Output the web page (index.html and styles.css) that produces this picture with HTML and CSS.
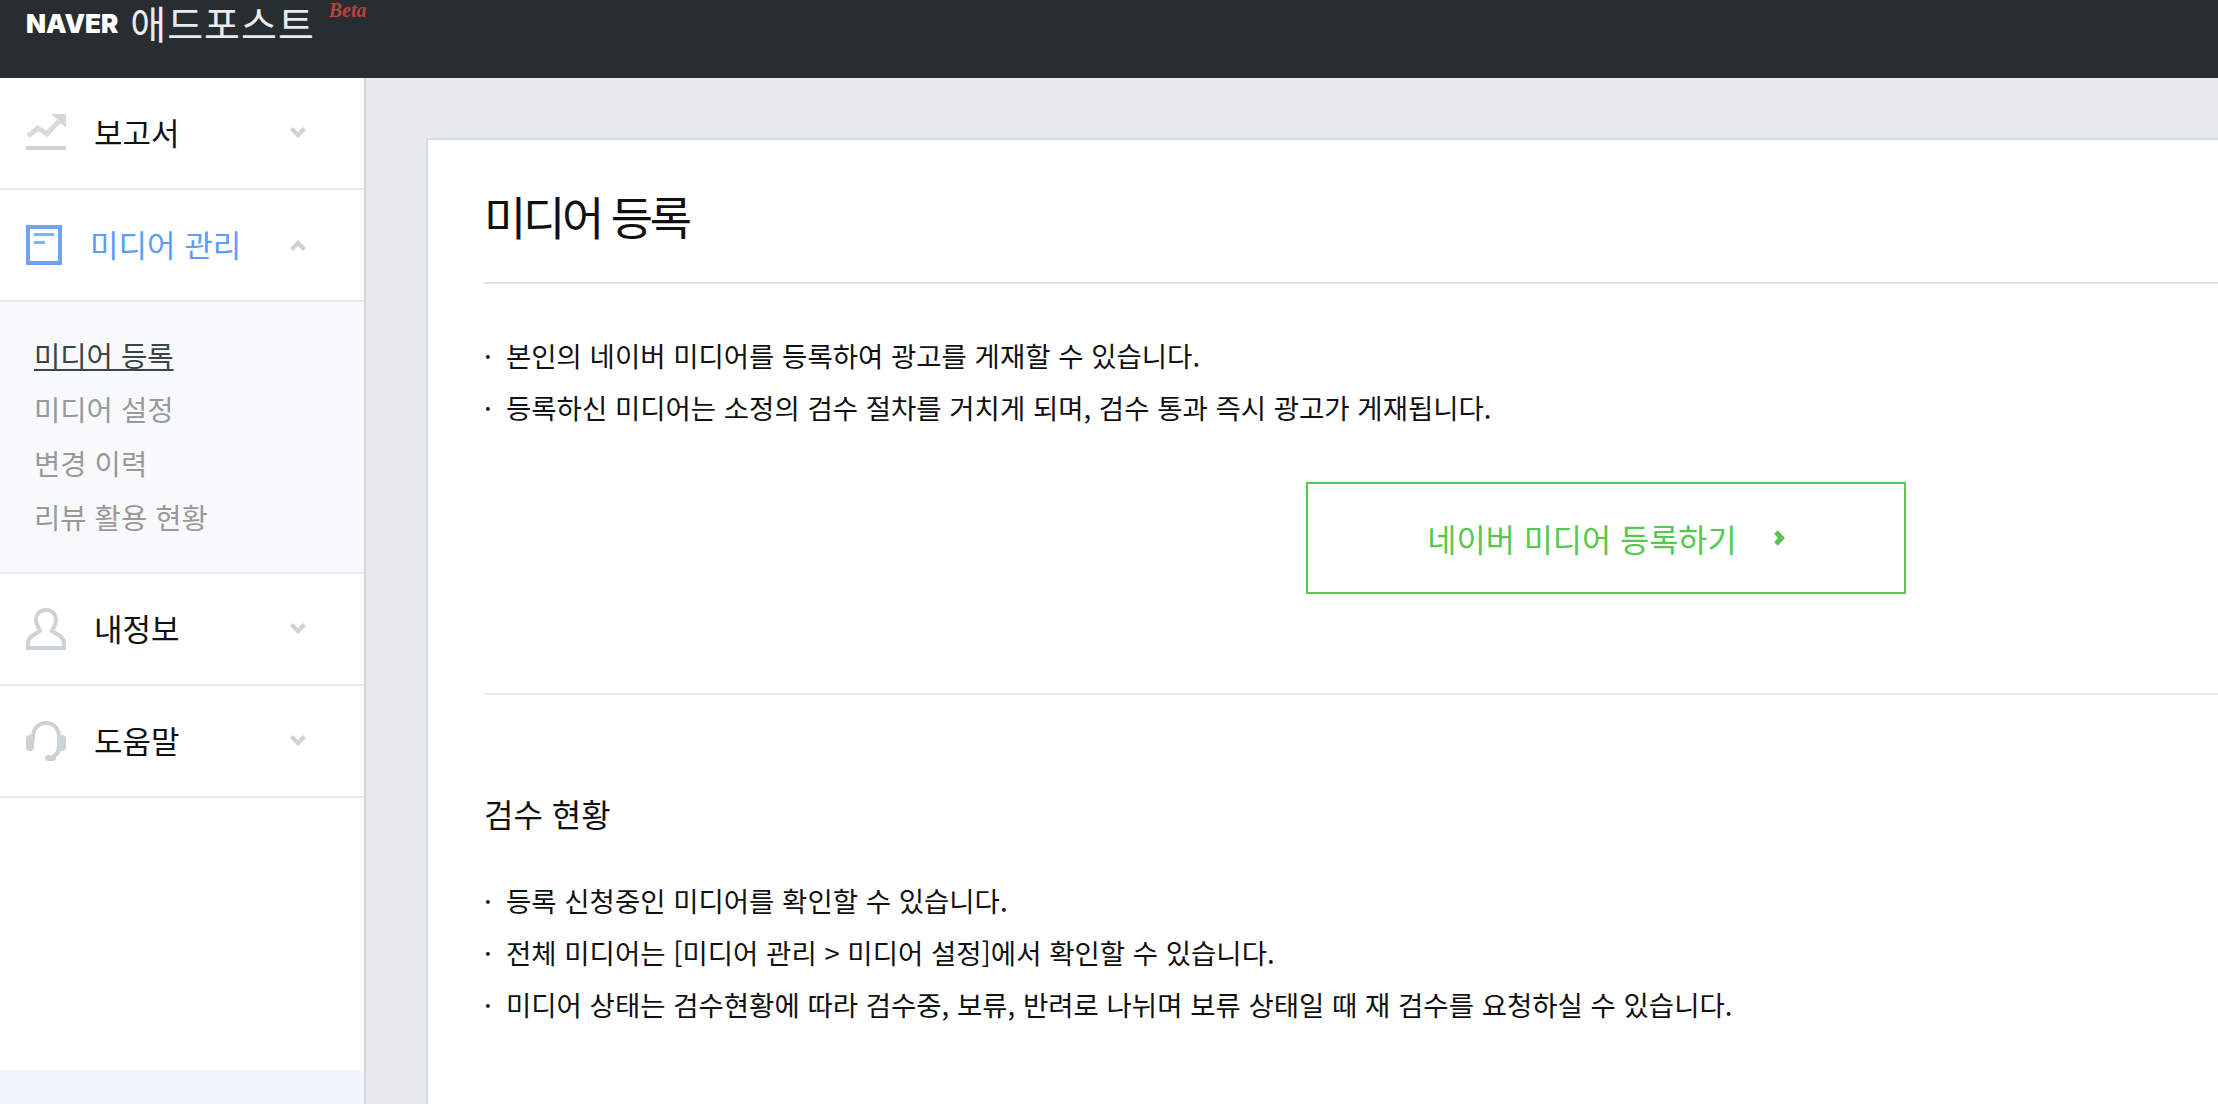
FILE: index.html
```html
<!DOCTYPE html>
<html lang="ko">
<head>
    <meta charset="UTF-8">
    <meta name="viewport" content="width=device-width, initial-scale=1.0">
    <title>네이버 애드포스트</title>
    <link rel="stylesheet" href="styles.css">
</head>
<body>
    <header class="topbar">
        <span class="logo-naver">NAVER</span>
        <span class="logo-name">애드포스트</span>
        <span class="logo-beta">Beta</span>
    </header>

    <div class="layout">
        <aside class="sidebar">
            <nav>
                <a class="menu-item">
                    <svg class="menu-icon" width="40" height="38" viewBox="0 0 40 38">
                        <path d="M2 22 L12 14 L21 20 L33 7" fill="none" stroke="#d7dbdf" stroke-width="5"/>
                        <path d="M25 0 H40 V14 Z" fill="#d3d8dc"/>
                        <rect x="0" y="32" width="40" height="4" fill="#ccd1d5"/>
                    </svg>
                    <span class="menu-label">보고서</span>
                    <svg class="menu-arrow" width="16" height="12" viewBox="0 0 16 12"><path d="M0 3 L3 0 L8 5 L13 0 L16 3 L8 11 Z" fill="#cdd2d7"/></svg>
                </a>
                <a class="menu-item menu-item-open">
                    <svg class="menu-icon" width="36" height="40" viewBox="0 0 36 40">
                        <rect x="2" y="2" width="32" height="36" fill="none" stroke="#6ea6ee" stroke-width="4"/>
                        <rect x="8" y="8" width="20" height="3" fill="#7fb0f0"/>
                        <rect x="8" y="16" width="11" height="3" fill="#7fb0f0"/>
                    </svg>
                    <span class="menu-label">미디어 관리</span>
                    <svg class="menu-arrow" width="16" height="12" viewBox="0 0 16 12"><path d="M0 9 L3 12 L8 7 L13 12 L16 9 L8 1 Z" fill="#cdd2d7"/></svg>
                </a>
                <div class="submenu">
                    <a class="submenu-link submenu-link-on">미디어 등록</a>
                    <a class="submenu-link">미디어 설정</a>
                    <a class="submenu-link">변경 이력</a>
                    <a class="submenu-link">리뷰 활용 현황</a>
                </div>
                <a class="menu-item">
                    <svg class="menu-icon" width="40" height="42" viewBox="0 0 40 42">
                        <path d="M20 2 C13 2 10 7 10 12 C10 17 13 20 14 23 C10 26 2 28 2 35 V40 H38 V35 C38 28 30 26 26 23 C27 20 30 17 30 12 C30 7 27 2 20 2 Z" fill="none" stroke="#ccd2d6" stroke-width="4"/>
                    </svg>
                    <span class="menu-label">내정보</span>
                    <svg class="menu-arrow" width="16" height="12" viewBox="0 0 16 12"><path d="M0 3 L3 0 L8 5 L13 0 L16 3 L8 11 Z" fill="#cdd2d7"/></svg>
                </a>
                <a class="menu-item">
                    <svg class="menu-icon" width="40" height="40" viewBox="0 0 40 40">
                        <path d="M7 20 V16 C7 7 13 2 20 2 C27 2 33 7 33 16 V25 C33 32 29 36 23 37" fill="none" stroke="#ccd2d6" stroke-width="4"/>
                        <rect x="0" y="14" width="8" height="16" rx="4" fill="#ccd2d6"/>
                        <rect x="32" y="14" width="8" height="16" rx="4" fill="#ccd2d6"/>
                        <rect x="19" y="34" width="11" height="6" rx="3" fill="#ccd2d6"/>
                    </svg>
                    <span class="menu-label">도움말</span>
                    <svg class="menu-arrow" width="16" height="12" viewBox="0 0 16 12"><path d="M0 3 L3 0 L8 5 L13 0 L16 3 L8 11 Z" fill="#cdd2d7"/></svg>
                </a>
            </nav>
            <div class="sidebar-foot"></div>
        </aside>

        <main class="content">
            <section class="card">
                <h1 class="page-title">미디어 등록</h1>
                <ul class="notes">
                    <li>본인의 네이버 미디어를 등록하여 광고를 게재할 수 있습니다.</li>
                    <li>등록하신 미디어는 소정의 검수 절차를 거치게 되며, 검수 통과 즉시 광고가 게재됩니다.</li>
                </ul>
                <div class="action">
                    <a class="btn-register">
                        <span>네이버 미디어 등록하기</span>
                        <svg width="12" height="18" viewBox="0 0 12 18"><path d="M3 3 L8.5 9 L3 15" fill="none" stroke="#5ac451" stroke-width="5"/></svg>
                    </a>
                </div>
                <h2 class="section-title">검수 현황</h2>
                <ul class="notes">
                    <li>등록 신청중인 미디어를 확인할 수 있습니다.</li>
                    <li>전체 미디어는 [미디어 관리 &gt; 미디어 설정]에서 확인할 수 있습니다.</li>
                    <li>미디어 상태는 검수현황에 따라 검수중, 보류, 반려로 나뉘며 보류 상태일 때 재 검수를 요청하실 수 있습니다.</li>
                </ul>
            </section>
        </main>
    </div>
</body>
</html>
```

FILE: styles.css
```css
html, body {
    height: 100%;
}
body {
    margin: 0;
    overflow: hidden;
    display: flex;
    flex-direction: column;
    font-family: "Noto Sans CJK KR", "Noto Sans", sans-serif;
    color: #111;
    background-color: #e6eaed;
}
a {
    color: inherit;
    text-decoration: none;
}

/* top bar */
.topbar {
    flex: 0 0 78px;
    display: flex;
    align-items: flex-start;
    background-color: #282d31;
    color: #e9ebec;
}
.logo-naver {
    margin: 8px 0 0 26px;
    font-family: Inter, sans-serif;
    font-weight: 900;
    font-size: 26px;
    line-height: 32px;
    color: #fff;
}
.logo-name {
    margin-left: 12px;
    font-size: 39px;
    line-height: 44px;
    letter-spacing: 1px;
}
.logo-beta {
    margin-left: 14px;
    font-family: "Liberation Serif", serif;
    font-style: italic;
    font-weight: 700;
    font-size: 20px;
    line-height: 20px;
    color: #b8413c;
}

.layout {
    flex: 1;
    display: flex;
    min-height: 0;
}

/* left menu */
.sidebar {
    flex: 0 0 364px;
    display: flex;
    flex-direction: column;
    background-color: #fff;
    border-right: 2px solid #d2d6db;
}
.sidebar nav {
    flex: 1;
}
.menu-item {
    position: relative;
    display: flex;
    align-items: center;
    height: 110px;
    padding-left: 26px;
    border-bottom: 2px solid #e6eaed;
    font-size: 31px;
}
.menu-icon {
    flex: none;
}
.menu-label {
    margin: -4px 0 0 28px;
}
.menu-arrow {
    position: absolute;
    left: 290px;
    top: 50%;
    margin-top: -6px;
}
.menu-item-open {
    color: #5b9ef5;
}
.submenu {
    padding: 26px 0 28px 34px;
    background-color: #f8f9fb;
    border-bottom: 2px solid #e6eaed;
}
.submenu-link {
    display: block;
    line-height: 54px;
    font-size: 28.6px;
    color: #999;
}
.submenu-link-on {
    color: #3a4449;
    text-decoration: underline;
}
.sidebar-foot {
    height: 34px;
    background-color: #f1f6fd;
}

/* main area */
.content {
    flex: 1;
    min-width: 0;
    padding: 60px 0 0 60px;
}
.card {
    width: 2242px;
    height: 100%;
    padding: 0 56px;
    background-color: #fff;
    border: 2px solid #d8dcdf;
    border-width: 2px 0 0 2px;
}
.page-title {
    margin: 0 0 45px;
    padding: 40px 0 32px;
    border-bottom: 2px solid #e2e5e8;
    font-size: 46px;
    line-height: 70px;
    font-weight: 400;
    letter-spacing: -3.3px;
}
.notes {
    margin: 0;
    padding: 0;
    list-style: none;
    font-size: 27.5px;
    line-height: 52px;
}
.notes li {
    position: relative;
    padding-left: 22px;
}
.notes li::before {
    content: "·";
    position: absolute;
    left: 0;
}
.action {
    display: flex;
    justify-content: center;
    padding: 49px 0 99px 2px;
    border-bottom: 2px solid #e9ebee;
}
.btn-register {
    display: flex;
    align-items: center;
    justify-content: center;
    gap: 36px;
    box-sizing: border-box;
    width: 600px;
    height: 112px;
    border: 2px solid #57c84f;
    color: #57c84f;
    font-size: 31.7px;
}
.section-title {
    margin: 90px 0 33px;
    font-size: 32px;
    line-height: 56px;
    font-weight: 400;
}
```
